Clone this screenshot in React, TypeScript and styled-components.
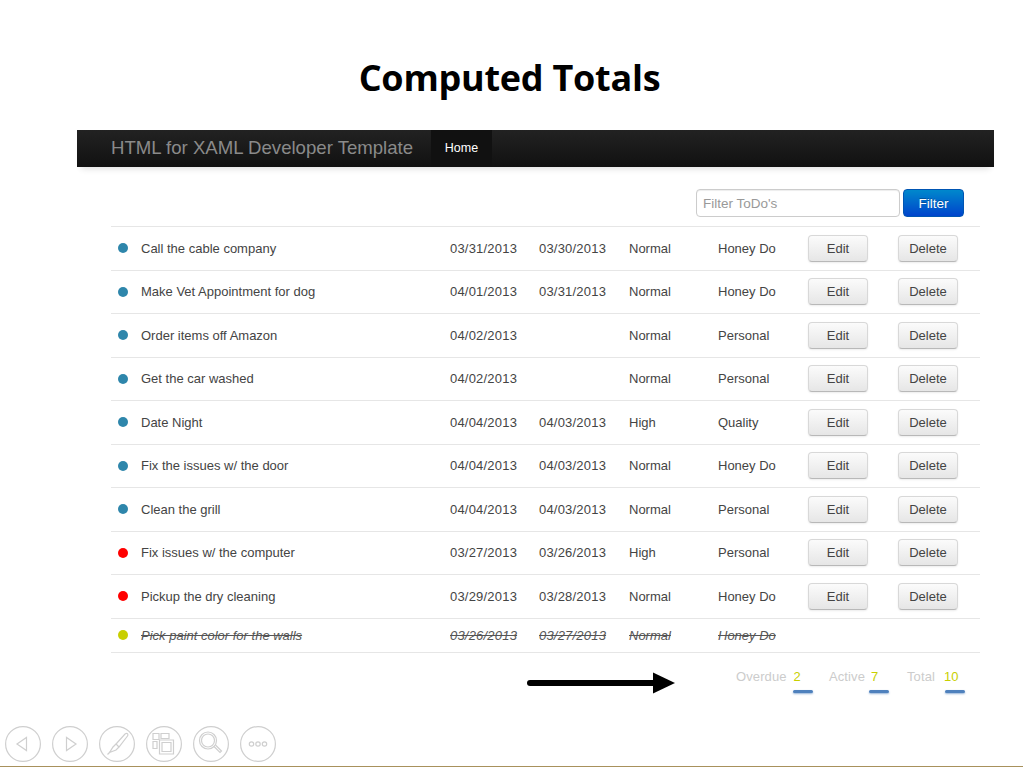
import React from 'react';
import styled, { createGlobalStyle } from 'styled-components';

const GlobalStyle = createGlobalStyle`
  html, body {
    margin: 0;
    padding: 0;
    background: #fff;
    font-family: "Liberation Sans", Arial, sans-serif;
    color: #333;
  }
`;

const Slide = styled.div`
  width: 1023px;
  height: 767px;
  display: flex;
  flex-direction: column;
  overflow: hidden;
`;

const Title = styled.h1`
  margin: 0;
  height: 130px;
  flex: none;
  box-sizing: border-box;
  padding: 55px 4px 0 0;
  text-align: center;
  font-family: "Open Sans", sans-serif;
  font-size: 36px;
  line-height: 46px;
  font-weight: 700;
  letter-spacing: -0.25px;
  color: #000;
`;

const Navbar = styled.nav`
  margin-left: 77px;
  width: 917px;
  height: 37px;
  flex: none;
  box-sizing: border-box;
  padding-left: 34px;
  display: flex;
  align-items: stretch;
  background: linear-gradient(to bottom, #222, #111);
  box-shadow: 0 6px 6px -4px rgba(0, 0, 0, 0.12);
`;

const Brand = styled.div`
  width: 320px;
  font-size: 18.6px;
  line-height: 36px;
  color: #8a8a8a;
  white-space: nowrap;
`;

const NavItem = styled.div`
  width: 61px;
  text-align: center;
  font-size: 12.5px;
  line-height: 36px;
  color: #fff;
  background: #111;
`;

const Content = styled.main`
  margin-left: 111px;
  width: 869px;
`;

const FilterBar = styled.div`
  height: 59px;
  box-sizing: border-box;
  padding: 22px 16px 0 0;
  display: flex;
  justify-content: flex-end;
  align-items: flex-start;
  gap: 3px;
`;

const FilterInput = styled.input`
  width: 204px;
  height: 28px;
  box-sizing: border-box;
  padding: 0 6px;
  border: 1px solid #ccc;
  border-radius: 4px;
  box-shadow: inset 0 1px 1px rgba(0, 0, 0, 0.075);
  font: 13.5px "Liberation Sans", Arial, sans-serif;
  color: #333;
  outline: none;

  &::placeholder {
    color: #999;
    opacity: 1;
  }
`;

const FilterButton = styled.button`
  width: 61px;
  height: 28px;
  padding: 0;
  border: 1px solid #0055b3;
  border-radius: 4px;
  background: linear-gradient(to bottom, #0088cc, #0044cc);
  color: #fff;
  font: 13.5px "Liberation Sans", Arial, sans-serif;
  text-shadow: 0 -1px 0 rgba(0, 0, 0, 0.25);
`;

const Rows = styled.div`
  border-bottom: 1.5px solid #e6e6e6;
`;

const Row = styled.div<{ $last?: boolean }>`
  height: ${(p) => (p.$last ? '34.5px' : '43.5px')};
  box-sizing: border-box;
  border-top: 1.5px solid #e6e6e6;
  display: grid;
  grid-template-columns: 30px 309px 89px 90px 89px 90px 90px 82px;
  align-items: center;
  font-size: 13px;
  color: ${(p) => (p.$last ? '#555' : '#444')};
  font-style: ${(p) => (p.$last ? 'italic' : 'normal')};
  text-decoration: ${(p) => (p.$last ? 'line-through' : 'none')};
`;

const Dot = styled.span<{ $color: string }>`
  width: 10px;
  height: 10px;
  margin-left: 7px;
  border-radius: 50%;
  background: ${(p) => p.$color};
`;

const Cell = styled.span`
  white-space: nowrap;
`;

const DateCell = styled(Cell)`
  letter-spacing: 0.2px;
`;

const RowButton = styled.button`
  width: 60px;
  height: 27px;
  padding: 0;
  border: 1px solid #d8d8d8;
  border-bottom-color: #b8b8b8;
  border-radius: 4px;
  background: linear-gradient(to bottom, #fbfbfb, #e6e6e6);
  box-shadow: 0 1px 2px rgba(0, 0, 0, 0.08);
  color: #444;
  font: 13px "Liberation Sans", Arial, sans-serif;
`;

const Summary = styled.div`
  height: 60px;
  box-sizing: border-box;
  display: flex;
  align-items: flex-start;
`;

const Arrow = styled.svg`
  width: 150px;
  height: 24px;
  margin: 18px 0 0 415px;
  flex: none;
`;

const StatGroup = styled.div`
  margin-left: 60px;
  display: flex;
`;

const Stat = styled.div<{ $width: number }>`
  width: ${(p) => p.$width}px;
  flex: none;
  position: relative;
  padding-top: 16px;
  font-size: 13px;
  line-height: 16px;
  letter-spacing: 0.1px;
  color: #ccc;
  white-space: nowrap;
`;

const StatValue = styled.span<{ $gap: number }>`
  margin-left: ${(p) => p.$gap}px;
  color: #c8cf00;
`;

const StatMark = styled.i<{ $left: number }>`
  position: absolute;
  top: 37px;
  left: ${(p) => p.$left}px;
  width: 20px;
  height: 3px;
  border-radius: 2px;
  background: #4f81bd;
  box-shadow: 0 1px 2px rgba(79, 129, 189, 0.6);
`;

const Toolbar = styled.div`
  margin-top: auto;
  height: 48px;
  flex: none;
  box-sizing: border-box;
  padding: 7px 0 0 5px;
  display: flex;
  gap: 11px;
  border-bottom: 1px solid #a8915c;
`;

const ToolIcon = styled.svg`
  width: 36px;
  height: 36px;
  flex: none;
  fill: none;
  stroke: #cfcfcf;
  stroke-width: 1.2;
`;

type Todo = {
  name: string;
  due: string;
  remind: string;
  priority: string;
  category: string;
  color: string;
};

const blue = '#2e86ab';
const red = '#f00';

const todos: Todo[] = [
  { name: 'Call the cable company', due: '03/31/2013', remind: '03/30/2013', priority: 'Normal', category: 'Honey Do', color: blue },
  { name: 'Make Vet Appointment for dog', due: '04/01/2013', remind: '03/31/2013', priority: 'Normal', category: 'Honey Do', color: blue },
  { name: 'Order items off Amazon', due: '04/02/2013', remind: '', priority: 'Normal', category: 'Personal', color: blue },
  { name: 'Get the car washed', due: '04/02/2013', remind: '', priority: 'Normal', category: 'Personal', color: blue },
  { name: 'Date Night', due: '04/04/2013', remind: '04/03/2013', priority: 'High', category: 'Quality', color: blue },
  { name: 'Fix the issues w/ the door', due: '04/04/2013', remind: '04/03/2013', priority: 'Normal', category: 'Honey Do', color: blue },
  { name: 'Clean the grill', due: '04/04/2013', remind: '04/03/2013', priority: 'Normal', category: 'Personal', color: blue },
  { name: 'Fix issues w/ the computer', due: '03/27/2013', remind: '03/26/2013', priority: 'High', category: 'Personal', color: red },
  { name: 'Pickup the dry cleaning', due: '03/29/2013', remind: '03/28/2013', priority: 'Normal', category: 'Honey Do', color: red },
];

const ring = <circle cx="18" cy="18" r="17.4" />;

export default function App() {
  return (
    <Slide>
      <GlobalStyle />
      <Title>Computed Totals</Title>
      <Navbar>
        <Brand>HTML for XAML Developer Template</Brand>
        <NavItem>Home</NavItem>
      </Navbar>
      <Content>
        <FilterBar>
          <FilterInput placeholder="Filter ToDo's" />
          <FilterButton>Filter</FilterButton>
        </FilterBar>
        <Rows>
          {todos.map((t) => (
            <Row key={t.name}>
              <Dot $color={t.color} />
              <Cell>{t.name}</Cell>
              <DateCell>{t.due}</DateCell>
              <DateCell>{t.remind}</DateCell>
              <Cell>{t.priority}</Cell>
              <Cell>{t.category}</Cell>
              <RowButton>Edit</RowButton>
              <RowButton>Delete</RowButton>
            </Row>
          ))}
          <Row $last>
            <Dot $color="#c8cf00" />
            <Cell>Pick paint color for the walls</Cell>
            <DateCell>03/26/2013</DateCell>
            <DateCell>03/27/2013</DateCell>
            <Cell>Normal</Cell>
            <Cell>Honey Do</Cell>
          </Row>
        </Rows>
        <Summary>
          <Arrow viewBox="0 0 150 24">
            <path d="M4 12H130" stroke="#000" strokeWidth="6" strokeLinecap="round" />
            <path d="M127 1.5L149 12L127 22.5Z" fill="#000" />
          </Arrow>
          <StatGroup>
            <Stat $width={93}>
              Overdue<StatValue $gap={7}>2</StatValue>
              <StatMark $left={57} />
            </Stat>
            <Stat $width={78}>
              Active<StatValue $gap={6}>7</StatValue>
              <StatMark $left={40} />
            </Stat>
            <Stat $width={60}>
              Total<StatValue $gap={9}>10</StatValue>
              <StatMark $left={38} />
            </Stat>
          </StatGroup>
        </Summary>
      </Content>
      <Toolbar>
        <ToolIcon viewBox="0 0 36 36">
          {ring}
          <path d="M21.5 11.5V24.5L12 18Z" />
        </ToolIcon>
        <ToolIcon viewBox="0 0 36 36">
          {ring}
          <path d="M14.5 11.5V24.5L24 18Z" />
        </ToolIcon>
        <ToolIcon viewBox="0 0 36 36">
          {ring}
          <path d="M27 7.5C28.5 7 29.5 8.5 28.5 10L20 21L17 18L26 8ZM17 18L14 21L10.5 26.5L8.5 28.5M20 21L17 24L10.5 26.5" />
        </ToolIcon>
        <ToolIcon viewBox="0 0 36 36">
          {ring}
          <path d="M7 7.5H13V13.5H7ZM15 7.5H23V12.5H15ZM7 15.5H11V22.5H7ZM13.5 14H27.5V28H13.5ZM16 16.5H25V25.5H16Z" />
        </ToolIcon>
        <ToolIcon viewBox="0 0 36 36">
          {ring}
          <circle cx="15" cy="14.5" r="8.5" />
          <circle cx="15" cy="14.5" r="6.5" />
          <path d="M21 20.5L27 26.5L28.5 25L22.5 19" />
        </ToolIcon>
        <ToolIcon viewBox="0 0 36 36">
          {ring}
          <circle cx="11.5" cy="18" r="2.2" />
          <circle cx="18" cy="18" r="2.2" />
          <circle cx="24.5" cy="18" r="2.2" />
        </ToolIcon>
      </Toolbar>
    </Slide>
  );
}
